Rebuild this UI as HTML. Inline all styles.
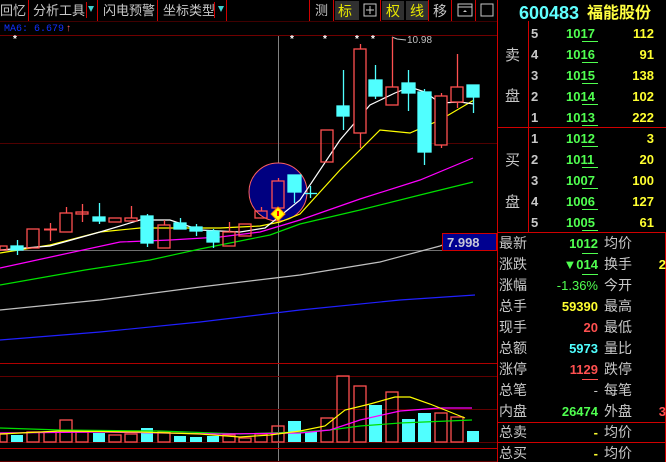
<!DOCTYPE html>
<html><head><meta charset="utf-8"><style>
body{margin:0;background:#000;width:666px;height:462px;overflow:hidden;font-family:"Liberation Sans","WenQuanYi Zen Hei","Noto Sans CJK SC",sans-serif}
svg{position:absolute;left:0;top:0}
</style></head><body>
<svg width="666" height="462" viewBox="0 0 666 462" xmlns="http://www.w3.org/2000/svg" font-family="'Liberation Sans','WenQuanYi Zen Hei','Noto Sans CJK SC',sans-serif">
<rect width="666" height="462" fill="#000"/>
<g fill="#c8c8c8" font-size="13">
<text x="0" y="15">回忆</text>
<text x="33" y="15">分析工具</text>
<text x="103" y="15">闪电预警</text>
<text x="163" y="15">坐标类型</text>
<text x="315" y="15">测</text>
</g>
<g stroke="#d00000" stroke-width="1">
<line x1="28.5" y1="0" x2="28.5" y2="21"/><line x1="86.5" y1="2" x2="86.5" y2="18"/><line x1="97.5" y1="0" x2="97.5" y2="21"/>
<line x1="157.5" y1="0" x2="157.5" y2="21"/><line x1="214.5" y1="2" x2="214.5" y2="18"/><line x1="226.5" y1="0" x2="226.5" y2="21"/>
<line x1="309.5" y1="0" x2="309.5" y2="21"/><line x1="333.5" y1="0" x2="333.5" y2="21"/>
<line x1="380.5" y1="0" x2="380.5" y2="21"/><line x1="428.5" y1="0" x2="428.5" y2="21"/><line x1="451.5" y1="0" x2="451.5" y2="21"/><line x1="475.5" y1="0" x2="475.5" y2="21"/>
<line x1="497.5" y1="0" x2="497.5" y2="462"/>
<line x1="0" y1="21.5" x2="497" y2="21.5" stroke="#400000"/>
<line x1="0" y1="35.5" x2="497" y2="35.5" stroke="#700000"/>
</g>
<polygon points="88,6 94,6 91,12" fill="#40d0d0"/><polygon points="218,6 224,6 221,12" fill="#40d0d0"/>
<rect x="335" y="1" width="24" height="19" fill="#303030"/><rect x="382" y="1" width="22" height="19" fill="#303030"/><rect x="406" y="1" width="22" height="19" fill="#303030"/>
<text x="338" y="16" fill="#e8e800" font-size="14">标</text>
<rect x="364" y="4" width="12" height="12" fill="none" stroke="#c8c8c8"/><line x1="370" y1="6" x2="370" y2="14" stroke="#c8c8c8"/><line x1="366" y1="10" x2="374" y2="10" stroke="#c8c8c8"/>
<text x="386" y="16" fill="#e8e800" font-size="14">权</text>
<text x="410" y="16" fill="#e8e800" font-size="14">线</text>
<text x="433" y="16" fill="#c8c8c8" font-size="14">移</text>
<rect x="458" y="4" width="14" height="12" fill="none" stroke="#c8c8c8"/><line x1="458" y1="7" x2="472" y2="7" stroke="#c8c8c8"/><polygon points="463,12 467,12 465,10" fill="#c8c8c8"/>
<rect x="481" y="4" width="12" height="12" fill="none" stroke="#c8c8c8"/>
<text x="519" y="19" fill="#60ffff" font-size="18" font-weight="bold">600483</text>
<text x="587" y="18" fill="#ffff40" font-size="16" font-weight="bold">福能股份</text>
<text x="4" y="31" fill="#1030ff" font-size="10" font-family="'Liberation Mono',monospace">MA6: 6.679</text>
<text x="66" y="31" fill="#ff6060" font-size="10">↑</text>
<line x1="0" y1="143.5" x2="497" y2="143.5" stroke="#500000"/>
<line x1="0" y1="250.5" x2="497" y2="250.5" stroke="#707070"/>
<line x1="278.5" y1="36" x2="278.5" y2="462" stroke="#808080"/>
<g fill="#fff" font-size="10" font-weight="bold"><text x="13" y="42">*</text><text x="290" y="42">*</text><text x="323" y="42">*</text><text x="355" y="42">*</text><text x="371" y="42">*</text></g>
<polyline points="392,37 397,39 406,40" fill="none" stroke="#c0c0c0"/>
<text x="407" y="43" fill="#c0c0c0" font-size="10">10.98</text>
<circle cx="278" cy="192" r="29" fill="#000080" stroke="#ff6060"/>
<g fill="none" stroke-width="1.2">
<polyline stroke="#c0c0c0" points="0,310 100,300 200,287 300,275 380,262 440,246 462,238"/>
<polyline stroke="#2020ff" points="0,340 100,332 200,322 300,310 400,300 475,295"/>
<polyline stroke="#00e000" points="0,285 85,270 150,260 200,249 240,241 270,235 300,224 360,210 420,195 473,182"/>
<polyline stroke="#ff00ff" points="0,268 60,255 120,242 170,240 220,237 260,232 300,220 360,199 420,180 473,158"/>
<polyline stroke="#ffff00" points="0,253 50,245 100,232 140,228 180,228 220,228 260,226 280,222 300,214 340,170 380,130 410,133 440,120 474,100"/>
<polyline stroke="#ffffff" points="0,250 50,246 100,232 140,220 170,220 200,230 240,232 265,228 300,200 340,140 370,105 395,93 410,87 425,92 440,103 460,102 474,104"/>
</g>
<g stroke-width="1.3">
<g stroke="#ff5050" fill="none">
<rect x="0" y="246" width="7" height="4"/><rect x="27" y="229" width="12" height="19"/><line x1="44" y1="229.5" x2="57" y2="229.5" stroke-width="2"/><line x1="50.5" y1="223" x2="50.5" y2="241"/>
<line x1="66.5" y1="207" x2="66.5" y2="213"/><rect x="60" y="213" width="12" height="19"/>
<line x1="82.5" y1="204" x2="82.5" y2="222"/><rect x="76" y="212" width="12" height="2"/>
<rect x="109" y="218" width="12" height="4"/><line x1="131.5" y1="206" x2="131.5" y2="218"/><rect x="125" y="218" width="12" height="3"/>
<line x1="164.5" y1="220" x2="164.5" y2="225"/><rect x="158" y="225" width="12" height="23"/>
<line x1="229.5" y1="222" x2="229.5" y2="232"/><rect x="223" y="232" width="12" height="14"/><rect x="239" y="224" width="12" height="12"/>
<line x1="261.5" y1="207" x2="261.5" y2="211"/><rect x="255" y="211" width="12" height="7"/>
<line x1="278.5" y1="178" x2="278.5" y2="181"/><rect x="272" y="181" width="12" height="27"/>
<rect x="321" y="130" width="12" height="32"/>
<line x1="360.5" y1="44" x2="360.5" y2="148"/><rect x="354" y="49" width="12" height="84" fill="#000"/>
<line x1="392.5" y1="37" x2="392.5" y2="87"/><rect x="386" y="87" width="12" height="18"/>
<line x1="441.5" y1="93" x2="441.5" y2="148"/><rect x="435" y="96" width="12" height="49" fill="#000"/>
<line x1="457.5" y1="54" x2="457.5" y2="108"/><rect x="451" y="87" width="12" height="15" fill="#000"/>
</g>
<g stroke="#50ffff" fill="#50ffff">
<rect x="11" y="246" width="12" height="4"/><line x1="17.5" y1="240" x2="17.5" y2="255"/>
<line x1="99.5" y1="203" x2="99.5" y2="224"/><rect x="93" y="217" width="12" height="4"/>
<line x1="147.5" y1="214" x2="147.5" y2="247"/><rect x="141" y="216" width="12" height="27"/>
<line x1="180.5" y1="218" x2="180.5" y2="229"/><rect x="174" y="223" width="12" height="6"/>
<line x1="196.5" y1="224" x2="196.5" y2="236"/><rect x="190" y="227" width="12" height="4"/>
<line x1="213.5" y1="229" x2="213.5" y2="248"/><rect x="207" y="231" width="12" height="11"/>
<line x1="294.5" y1="175" x2="294.5" y2="203"/><rect x="288" y="175" width="13" height="17"/>
<line x1="305" y1="193.5" x2="317" y2="193.5"/><line x1="310.5" y1="186" x2="310.5" y2="198"/>
<line x1="343.5" y1="70" x2="343.5" y2="130"/><rect x="337" y="106" width="12" height="10"/>
<line x1="375.5" y1="65" x2="375.5" y2="99"/><rect x="369" y="80" width="13" height="16"/>
<line x1="408.5" y1="70" x2="408.5" y2="111"/><rect x="402" y="83" width="13" height="10"/>
<line x1="424.5" y1="89" x2="424.5" y2="165"/><rect x="418" y="92" width="13" height="60"/>
<line x1="473.5" y1="97" x2="473.5" y2="113"/><rect x="467" y="85" width="12" height="12"/>
</g>
</g>
<polygon points="278,207 285,214 278,221 271,214" fill="#ffff00" stroke="#ff8000"/>
<rect x="277" y="211" width="2" height="5" fill="#ff0000"/>
<rect x="442.5" y="233.5" width="54" height="17" fill="#000090" stroke="#d00000"/>
<text x="447" y="247" fill="#c8c8d8" font-size="13" font-weight="bold">7.998</text>
<g stroke-width="1">
<line x1="0" y1="363.5" x2="497" y2="363.5" stroke="#b00000"/>
<line x1="0" y1="376.5" x2="497" y2="376.5" stroke="#600000"/>
<line x1="0" y1="409.5" x2="497" y2="409.5" stroke="#600000"/>
<line x1="0" y1="442.5" x2="497" y2="442.5" stroke="#600000"/>
<line x1="0" y1="448.5" x2="497" y2="448.5" stroke="#c00000"/>
<line x1="0" y1="461.5" x2="497" y2="461.5" stroke="#600000"/>
</g>
<g stroke="#ff5050" fill="none" stroke-width="1.3">
<rect x="0" y="434" width="7" height="8"/><rect x="27" y="432" width="12" height="10"/><rect x="44" y="432" width="12" height="10"/><rect x="60" y="420" width="12" height="22"/><rect x="76" y="432" width="12" height="10"/>
<rect x="109" y="435" width="12" height="7"/><rect x="125" y="434" width="12" height="8"/><rect x="158" y="432" width="12" height="10"/>
<rect x="223" y="435" width="12" height="7"/><rect x="239" y="438" width="12" height="4"/><rect x="255" y="434" width="12" height="8"/><rect x="272" y="426" width="12" height="16"/>
<rect x="321" y="418" width="12" height="24"/><rect x="337" y="376" width="12" height="66"/><rect x="354" y="386" width="12" height="56"/><rect x="386" y="392" width="12" height="50"/>
<rect x="435" y="413" width="12" height="29"/><rect x="451" y="417" width="12" height="25"/>
</g>
<g fill="#50ffff">
<rect x="11" y="435" width="12" height="7"/><rect x="93" y="433" width="12" height="9"/><rect x="141" y="428" width="12" height="14"/><rect x="174" y="436" width="12" height="6"/><rect x="190" y="437" width="12" height="5"/><rect x="207" y="436" width="12" height="6"/>
<rect x="288" y="421" width="13" height="21"/><rect x="305" y="431" width="12" height="11"/><rect x="369" y="405" width="13" height="37"/><rect x="402" y="419" width="13" height="23"/><rect x="418" y="413" width="13" height="29"/><rect x="467" y="431" width="12" height="11"/>
</g>
<g fill="none" stroke-width="1.2">
<polyline stroke="#00e000" points="0,428 60,430 160,431 240,434 300,432 330,430 360,426 400,423 472,420"/>
<polyline stroke="#ff00ff" points="0,433 100,432 220,434 300,433 330,430 360,420 400,411 440,408 472,408"/>
<polyline stroke="#ffff00" points="0,434 60,431 140,432 200,434 240,437 270,435 300,431 325,426 345,410 370,404 395,397 410,397 430,404 465,418"/>
</g>
<g stroke="#d00000">
<line x1="498" y1="127.5" x2="666" y2="127.5"/><line x1="498" y1="232.5" x2="666" y2="232.5"/>
<line x1="528.5" y1="21" x2="528.5" y2="232"/>
<line x1="498" y1="422.5" x2="666" y2="422.5"/><line x1="498" y1="442.5" x2="666" y2="442.5"/>
<line x1="665.5" y1="232" x2="665.5" y2="462"/>
</g>
<g fill="#c8c8c8" font-size="15"><text x="505" y="60">卖</text><text x="505" y="101">盘</text><text x="505" y="165">买</text><text x="505" y="207">盘</text></g>
<g font-size="13" font-weight="bold">
<g fill="#c8c8c8"><text x="531" y="38">5</text><text x="531" y="59">4</text><text x="531" y="80">3</text><text x="531" y="101">2</text><text x="531" y="122">1</text>
<text x="531" y="143">1</text><text x="531" y="164">2</text><text x="531" y="185">3</text><text x="531" y="206">4</text><text x="531" y="227">5</text></g>
<g fill="#50ff50"><text x="566" y="38">1017</text><text x="566" y="59">1016</text><text x="566" y="80">1015</text><text x="566" y="101">1014</text><text x="566" y="122">1013</text>
<text x="566" y="143">1012</text><text x="566" y="164">1011</text><text x="566" y="185">1007</text><text x="566" y="206">1006</text><text x="566" y="227">1005</text></g>
<g fill="#ffff30" text-anchor="end"><text x="654" y="38">112</text><text x="654" y="59">91</text><text x="654" y="80">138</text><text x="654" y="101">102</text><text x="654" y="122">222</text>
<text x="654" y="143">3</text><text x="654" y="164">20</text><text x="654" y="185">100</text><text x="654" y="206">127</text><text x="654" y="227">61</text></g>
</g>
<g stroke="#50ff50"><line x1="582" y1="41.5" x2="598" y2="41.5"/><line x1="582" y1="62.5" x2="598" y2="62.5"/><line x1="582" y1="83.5" x2="598" y2="83.5"/><line x1="582" y1="104.5" x2="598" y2="104.5"/><line x1="582" y1="125.5" x2="598" y2="125.5"/>
<line x1="582" y1="146.5" x2="598" y2="146.5"/><line x1="582" y1="167.5" x2="598" y2="167.5"/><line x1="582" y1="188.5" x2="598" y2="188.5"/><line x1="582" y1="209.5" x2="598" y2="209.5"/><line x1="582" y1="230.5" x2="598" y2="230.5"/>
<line x1="582" y1="253.5" x2="598" y2="253.5"/><line x1="582" y1="274.5" x2="598" y2="274.5"/></g>
<line x1="582" y1="379.5" x2="598" y2="379.5" stroke="#ff5050"/>
<g fill="#c8c8c8" font-size="14">
<text x="499" y="248">最新</text><text x="499" y="269">涨跌</text><text x="499" y="290">涨幅</text><text x="499" y="311">总手</text><text x="499" y="332">现手</text><text x="499" y="353">总额</text><text x="499" y="374">涨停</text><text x="499" y="395">总笔</text><text x="499" y="416">内盘</text><text x="499" y="437">总卖</text><text x="499" y="458">总买</text>
<text x="604" y="248">均价</text><text x="604" y="269">换手</text><text x="604" y="290">今开</text><text x="604" y="311">最高</text><text x="604" y="332">最低</text><text x="604" y="353">量比</text><text x="604" y="374">跌停</text><text x="604" y="395">每笔</text><text x="604" y="416">外盘</text><text x="604" y="437">均价</text><text x="604" y="458">均价</text>
</g>
<g font-size="13" font-weight="bold" text-anchor="end">
<text x="598" y="248" fill="#50ff50">1012</text>
<text x="598" y="269" fill="#50ff50">▼014</text>
<text x="598" y="290" fill="#50ff50" font-weight="normal">-1.36%</text>
<text x="598" y="311" fill="#ffff30">59390</text>
<text x="598" y="332" fill="#ff5050">20</text>
<text x="598" y="353" fill="#50ffff">5973</text>
<text x="598" y="374" fill="#ff5050">1129</text>
<text x="598" y="395" fill="#c8c8c8" font-weight="normal">-</text>
<text x="598" y="416" fill="#50ff50">26474</text>
<text x="598" y="437" fill="#ffff30">-</text>
<text x="598" y="458" fill="#ffff30">-</text>
<text x="666" y="269" fill="#ffff30">2</text>
<text x="666" y="416" fill="#ff5050">3</text>
</g>
</svg>
</body></html>
